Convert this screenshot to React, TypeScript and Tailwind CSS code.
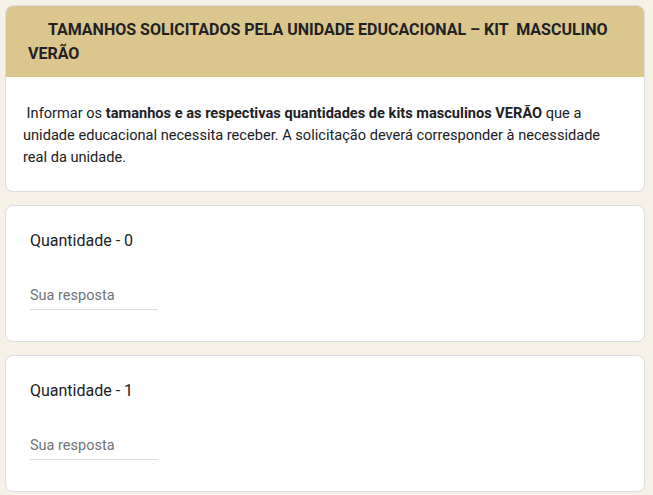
import React from "react";

function QuestionCard({ label }: { label: string }) {
  return (
    <div className="w-[640px] rounded-[8px] border border-[#dadce0] bg-white pl-[24px] pr-[24px] pt-[23px] pb-[31px]">
      <div className="text-[16px] leading-[24px] text-[#202124]">{label}</div>
      <div className="mt-[33px] w-[128px] border-b border-[#dadce0] pb-[3px] text-[14.5px] leading-[20px] text-[#70757a]">
        Sua resposta
      </div>
    </div>
  );
}

export default function App() {
  return (
    <div
      className="min-h-[495px] w-full bg-[#f6f1e7] pl-[5px] pt-[5px]"
      style={{ fontFamily: "Roboto, 'Noto Sans', Arial, sans-serif" }}
    >
      <div className="flex w-[640px] flex-col gap-[13px]">
        <div className="overflow-hidden rounded-[8px] border border-[#dadce0] bg-white">
          <div className="bg-[#dbc68e] pl-[22px] pr-[22px] pt-[12px] pb-[11px]">
            <div className="whitespace-pre-wrap text-[16px] font-bold leading-[24px] text-[#202124]">
              {"     TAMANHOS SOLICITADOS PELA UNIDADE EDUCACIONAL – KIT  MASCULINO VERÃO"}
            </div>
          </div>
          <div className="pl-[17px] pr-[30px] pt-[25px] pb-[23px] text-[14.6px] leading-[22px] text-[#202124]">
            {"\u00a0Informar os "}
            <b className="font-bold">tamanhos e as respectivas quantidades de kits masculinos VERÃO</b>
            {" que a unidade educacional necessita receber. A solicitação deverá corresponder à necessidade real da unidade."}
          </div>
        </div>
        <QuestionCard label="Quantidade - 0" />
        <QuestionCard label="Quantidade - 1" />
      </div>
    </div>
  );
}
